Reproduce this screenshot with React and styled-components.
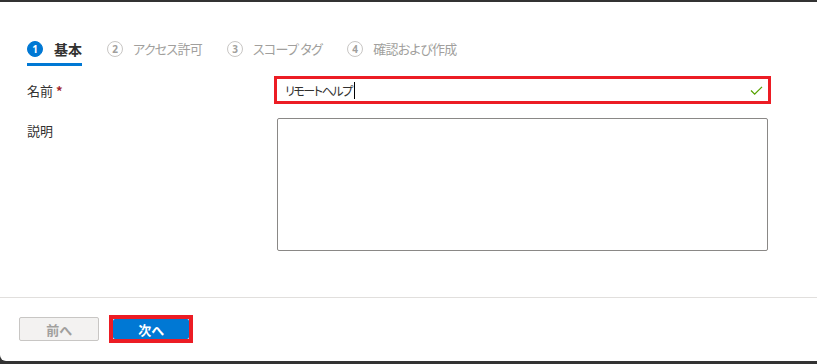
import React from 'react'
import styled, { createGlobalStyle } from 'styled-components'

const GlobalStyle = createGlobalStyle`
  html, body {
    margin: 0;
    padding: 0;
    background: #333333;
  }
  body {
    font-family: "Noto Sans CJK JP", "Noto Sans", sans-serif;
    font-feature-settings: "palt";
  }
`

const steps = [
  { n: 1, label: '基本' },
  { n: 2, label: 'アクセス許可' },
  { n: 3, label: 'スコープ タグ' },
  { n: 4, label: '確認および作成' },
]

const App = () => {
  return (
    <>
      <GlobalStyle />
      <Panel>
        <Steps>
          {steps.map((s) => (
            <Step key={s.n} active={s.n === 1}>
              <StepNum active={s.n === 1}>{s.n}</StepNum>
              <StepLabel active={s.n === 1}>{s.label}</StepLabel>
            </Step>
          ))}
        </Steps>

        <Form>
          <Row>
            <Label>
              名前 <Required>*</Required>
            </Label>
            <Highlight>
              <TextBox>
                <span>リモートヘルプ</span>
                <Caret />
                <Check viewBox="0 0 14 12">
                  <polyline points="1,6 5,10 13,2" fill="none" stroke="#57a300" strokeWidth="1.4" />
                </Check>
              </TextBox>
            </Highlight>
          </Row>
          <Row top>
            <Label pad>説明</Label>
            <TextArea />
          </Row>
        </Form>

        <Footer>
          <Button disabled>前へ</Button>
          <ButtonHighlight>
            <Button primary>次へ</Button>
          </ButtonHighlight>
        </Footer>
      </Panel>
    </>
  )
}

const Panel = styled.div`
  margin-top: 2px;
  height: 359px;
  background: #fff;
  border-bottom-left-radius: 6px;
  display: flex;
  flex-direction: column;
  overflow: hidden;
`

const Steps = styled.div`
  display: flex;
  gap: 25px;
  margin-top: 36px;
  padding-left: 27px;
`

const Step = styled.div`
  display: flex;
  align-items: center;
  gap: ${(p) => (p.active ? '11px' : '10px')};
  height: 22px;
  padding-bottom: 3px;
  border-bottom: 3px solid ${(p) => (p.active ? '#0078d4' : 'transparent')};
`

const StepNum = styled.span`
  width: 16px;
  height: 16px;
  box-sizing: border-box;
  border-radius: 50%;
  display: flex;
  align-items: center;
  justify-content: center;
  font-size: 10px;
  font-weight: 700;
  font-family: "Noto Sans", sans-serif;
  background: ${(p) => (p.active ? '#0078d4' : '#fff')};
  color: ${(p) => (p.active ? '#fff' : '#a19f9d')};
  border: 1px solid ${(p) => (p.active ? '#0078d4' : '#c8c6c4')};
`

const StepLabel = styled.span`
  font-size: ${(p) => (p.active ? '14px' : '13px')};
  letter-spacing: ${(p) => (p.active ? '0' : '-0.7px')};
  line-height: 20px;
  font-weight: ${(p) => (p.active ? 700 : 400)};
  color: ${(p) => (p.active ? '#323130' : '#a19f9d')};
`

const Form = styled.div`
  display: flex;
  flex-direction: column;
  gap: 14px;
  margin-top: 10px;
  padding: 0 49px 0 27px;
`

const Row = styled.div`
  display: grid;
  grid-template-columns: 250px 1fr;
  align-items: ${(p) => (p.top ? 'start' : 'center')};
`

const Label = styled.div`
  font-size: 13px;
  color: #323130;
  padding-top: ${(p) => (p.pad ? '3px' : '0')};
`

const Required = styled.span`
  color: #a4262c;
  font-weight: 700;
`

const Highlight = styled.div`
  margin-left: -3px;
  margin-right: -3px;
  border: 3px solid #ec1c24;
`

const TextBox = styled.div`
  height: 22px;
  display: flex;
  align-items: center;
  padding-left: 8px;
  font-size: 12px;
  color: #323130;
  letter-spacing: -1.4px;
`

const Caret = styled.span`
  display: inline-block;
  width: 1px;
  height: 17px;
  background: #000;
  margin-left: 2px;
`

const Check = styled.svg`
  width: 13px;
  height: 11px;
  margin-left: auto;
  margin-right: 5px;
`

const TextArea = styled.div`
  height: 131px;
  border: 1px solid #8a8886;
  border-radius: 2px;
`

const Footer = styled.div`
  margin-top: auto;
  height: 64px;
  border-top: 1px solid #e1dfdd;
  display: flex;
  align-items: flex-start;
  gap: 10px;
  padding: 17px 0 0 19px;
  box-sizing: border-box;
`

const ButtonHighlight = styled.div`
  border: 4px solid #ec1c24;
  display: flex;
`

const Button = styled.div`
  box-sizing: border-box;
  width: ${(p) => (p.primary ? '76px' : '80px')};
  height: ${(p) => (p.primary ? '20px' : '24px')};
  margin-top: ${(p) => (p.primary ? '0' : '2px')};
  display: flex;
  align-items: center;
  justify-content: center;
  font-size: 13px;
  font-weight: 700;
  border-radius: 2px;
  background: ${(p) => (p.primary ? '#0078d4' : '#f3f2f1')};
  color: ${(p) => (p.primary ? '#fff' : '#a19f9d')};
  border: ${(p) => (p.primary ? 'none' : '1px solid #c8c6c4')};
`

export default App
